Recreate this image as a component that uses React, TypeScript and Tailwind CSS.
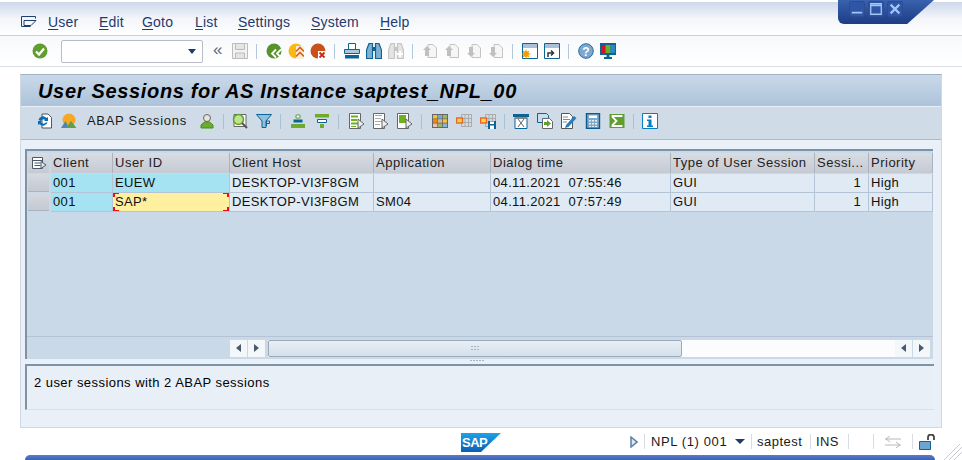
import React from 'react';

const font = "font-['Liberation_Sans',sans-serif]";

type IconProps = { children: React.ReactNode };
const Svg = ({ children }: IconProps) => (
  <svg width="16" height="16" viewBox="0 0 16 16" fill="none">{children}</svg>
);

// separators of the system toolbar
const Sep = () => <div className="w-px h-[15px] ml-[8px] mr-[9px] bg-[#b4c8dc] shrink-0" />;
// separators of the application toolbar
const AppSep = ({ extra = 0 }: { extra?: number }) => (
  <div className="w-px h-[15px] mx-[4px] bg-[#a9bfd4] shrink-0" style={{ marginRight: 4 + extra }} />
);

const Slot = ({ w, children }: { w: number; children: React.ReactNode }) => (
  <div className="flex items-center justify-center shrink-0" style={{ width: w }}>{children}</div>
);

const Check = () => (
  <Svg>
    <circle cx="8" cy="8" r="7.5" fill="#5f9e2f" />
    <path d="M4 8.500l3 3 5-6" stroke="#fff" strokeWidth="2.200" />
  </Svg>
);
const Save = () => (
  <Svg>
    <path d="M.5 .5h15v15H.5z" stroke="#bcbcbc" fill="#f2f2f2" />
    <path d="M3.500 .5h9v6h-9zM3.500 10h9v5.500h-9z" stroke="#bcbcbc" fill="#e4e4e4" />
  </Svg>
);
const Back = () => (
  <Svg>
    <circle cx="8" cy="8" r="7.5" fill="#57932a" />
    <path d="M10 6.500l-4 4 4 4M15 6.500l-4 4 4 4" stroke="#fff" strokeWidth="1.800" />
  </Svg>
);
const Exit = () => (
  <Svg>
    <circle cx="8" cy="8" r="7.5" fill="#fdb913" />
    <path d="M8 3h8v13H8z" fill="#fdf0d8" />
    <path d="M8 8.500l4-4 4 4M8 13.500l4-4 4 4" stroke="#d8641c" strokeWidth="1.700" />
  </Svg>
);
const Cancel = () => (
  <Svg>
    <circle cx="8" cy="8" r="7.5" fill="#c8511b" />
    <rect x="8" y="8" width="8" height="8" fill="#fff" />
    <path d="M9.500 9.500l5 5M14.500 9.500l-5 5" stroke="#c8281b" strokeWidth="1.800" />
  </Svg>
);
const Printer = () => (
  <Svg>
    <path d="M4.500 .5h7v6h-7z" stroke="#0a6496" fill="#fff" />
    <path d="M.5 6.500h15v4H.5z" fill="#a9c7dd" stroke="#0a6496" />
    <path d="M1 12h14v3.500H1z" fill="#0a6496" />
  </Svg>
);
const Binoculars = ({ grey }: { grey?: boolean }) => {
  const c = grey ? '#c4c4c4' : '#0a6496';
  const f = grey ? '#e4e4e4' : '#7fb0d2';
  return (
    <Svg>
      <path d="M3 .5h3.500v15h-6V7zM13 .5H9.500v15h6V7z" stroke={c} strokeWidth="1.200" fill={f} />
      <path d="M6.500 4h3v4h-3z" fill={c} />
      {grey && <path d="M9 11h6M12 8v6" stroke="#fff" strokeWidth="2" />}
    </Svg>
  );
};
const PageArrow = ({ up }: { up: boolean }) => (
  <Svg>
    <path d="M6 1.500h5l3.500 3.500v9.500H6z" stroke="#c4c4c4" fill="#f6f6f6" />
    <path d={up ? 'M5 3l4 4H7v6H3V7H1z' : 'M5 14l4-4H7V4H3v6H1z'} fill="#c0c0c0" />
  </Svg>
);
const NewWindow = ({ kind }: { kind: 'new' | 'link' }) => (
  <Svg>
    <path d="M.5 .5h15v15H.5z" stroke="#0a6496" fill="#fff" />
    <path d="M1 1h14v4H1z" fill="#a9c0d8" />
    {kind === 'new' ? (
      <>
        <circle cx="4" cy="11" r="3" fill="#f59c00" />
        <path d="M4 6.500v9M-.5 11h9M1 8l6 6M7 8l-6 6" stroke="#f59c00" />
      </>
    ) : (
      <path d="M4 14v-4h5M7 7.500L9.500 10 7 12.500" stroke="#333" strokeWidth="1.500" />
    )}
  </Svg>
);
const Help = () => (
  <svg width="16" height="16" viewBox="0 0 16 16">
    <circle cx="8" cy="8" r="7.300" fill="#7ba9cf" stroke="#2a6a9c" />
    <text x="8" y="12.500" textAnchor="middle" fontSize="12" fontWeight="700" fill="#fff" fontFamily="Liberation Sans">?</text>
  </svg>
);
const Monitor = () => (
  <Svg>
    <path d="M0 0h16v12H0z" fill="#0a6496" />
    <path d="M1 2h4.500v8H1z" fill="#d2122e" />
    <path d="M5.500 2h5v8h-5z" fill="#6fae1e" />
    <path d="M10.500 2H15v8h-4.500z" fill="#2b8ac6" />
    <path d="M6.500 12h3v2h-3zM4 14h8v2H4z" fill="#0a6496" />
  </Svg>
);
const Refresh = () => (
  <Svg>
    <path d="M5 1h6l3.500 3.500V15H5z" fill="#fff" stroke="#555" />
    <path d="M1.500 7a4.500 4.500 0 0 1 8-2l1.500-1v4H7l1-1a2.500 2.500 0 0 0-4 1zM10.500 9a4.500 4.500 0 0 1-8 2L1 12V8h4l-1 1a2.500 2.500 0 0 0 4 1z" fill="#0a6cb4" />
  </Svg>
);
const Mountain = () => (
  <Svg>
    <circle cx="8" cy="7" r="6.500" fill="#f7a823" />
    <path d="M0 15l4.500-7L8 15z" fill="#4b87b4" />
    <path d="M5 15l5-7 5.500 7z" fill="#5f9e4b" />
  </Svg>
);
const Person = () => (
  <Svg>
    <circle cx="8" cy="5" r="3.500" fill="#e9e4d6" stroke="#666" />
    <path d="M2 15v-3l3.500-3h5L14 12v3z" fill="#6eaa2e" stroke="#4b8a1e" />
  </Svg>
);
const Search = () => (
  <Svg>
    <path d="M2 1.500h12v12H2z" fill="#fff" stroke="#666" />
    <circle cx="6.500" cy="6.500" r="5" fill="#bfe28a" stroke="#5f9e2f" strokeWidth="1.500" />
    <path d="M10 10l5 5" stroke="#555" strokeWidth="2" />
  </Svg>
);
const Filter = () => (
  <Svg>
    <path d="M.5 1.500h15L10 8v6.500H6V8z" fill="#8fc0e0" stroke="#0a6496" />
    <path d="M10.500 8v5M10.500 8h3v2.500h-3" stroke="#0a6496" />
  </Svg>
);
const SortA = () => (
  <Svg>
    <path d="M6 2h4v3H6z" stroke="#5f9e2f" fill="#fff" />
    <path d="M3.500 6.500h9v3h-9z" fill="#0a6496" />
    <path d="M1 11h14v4H1z" fill="#6eaa2e" />
  </Svg>
);
const SortB = () => (
  <Svg>
    <path d="M1 1h14v3.500H1z" fill="#6eaa2e" />
    <path d="M3.500 6.500h9v3h-9z" stroke="#0a6496" fill="#fff" />
    <path d="M6 11h4v4H6z" fill="#6eaa2e" />
  </Svg>
);
const Doc = ({ v }: { v: 0 | 1 | 2 }) => (
  <Svg>
    <path d="M.5 .5h11v15H.5z" fill="#fff" stroke="#666" />
    {v === 0 && <path d="M2 2.500h7v2H2zM2 6h6v2H2zM2 9.500h7v2H2zM2 13h5v1H2z" fill="#6eb01e" />}
    {v === 1 && <path d="M2 2.500h7M2 5.500h6M2 8.500h7M2 11.500h5" stroke="#aaa" />}
    {v === 2 && <path d="M2 2h7v8H2z" fill="#6eb01e" />}
    <path d="M9 6l6 5-6 4z" fill="#eee" stroke="#666" />
  </Svg>
);
const Colors = () => (
  <Svg>
    <path d="M0 1h16v14H0z" fill="#666" />
    <path d="M1 2h4.200v3.500H1z" fill="#fdc02f" />
    <path d="M5.800 2h4.200v3.500H5.800z" fill="#7ba9cf" />
    <path d="M10.800 2H15v3.500h-4.200z" fill="#94bb62" />
    <path d="M1 6.200h4.200v3.500H1z" fill="#f08c00" />
    <path d="M5.800 6.200h4.200v3.500H5.800z" fill="#d8b4a0" />
    <path d="M10.800 6.200H15v3.500h-4.200z" fill="#fdc02f" />
    <path d="M1 10.500h4.200V14H1z" fill="#eebbbb" />
    <path d="M5.800 10.500h4.200V14H5.800z" fill="#94bb62" />
    <path d="M10.800 10.500H15V14h-4.200z" fill="#8ab4d8" />
  </Svg>
);
const Grid = ({ save }: { save?: boolean }) => (
  <Svg>
    <path d="M5.500 1.500h10v12h-10zM5.500 5.500h10M5.500 9.500h10M9 1.500v12M12.500 1.500v12" stroke="#aaa" />
    <rect x=".5" y="5" width="6" height="5" fill="#fdd835" stroke="#e8642c" strokeWidth="1.400" />
    {save && <path d="M8 8h8v8H8z" fill="#0a6496" />}
    {save && <path d="M10 8.500h4v2.500h-4zM10 12.500h4V16h-4z" fill="#fff" />}
  </Svg>
);
const Layout1 = () => (
  <Svg>
    <path d="M2 4.500h12v11H2z" stroke="#0a6496" fill="#fff" />
    <path d="M0 1h16v3H0z" fill="#0a6496" />
    <path d="M2 4h12v2H2z" fill="#888" />
    <path d="M5 6l6 8M11 6l-6 8" stroke="#666" />
  </Svg>
);
const Layout2 = () => (
  <Svg>
    <path d="M.5 .5h9l2 2v7h-11z" fill="#c7def0" stroke="#0a6496" />
    <path d="M5.500 5.500h7l3 3v7h-10z" fill="#fff" stroke="#666" />
    <path d="M7 9h3V7l4 3.500L10 14v-2H7z" fill="#5f9e2f" />
  </Svg>
);
const Pencil = () => (
  <Svg>
    <path d="M.5 .5h8l3 3v12H.5z" fill="#fff" stroke="#555" />
    <path d="M2 4h5M2 6.500h7M2 9h4" stroke="#888" />
    <path d="M4 15l1-3 8-9 2.500 2-8 9z" fill="#2b7cb8" />
  </Svg>
);
const Calculator = () => (
  <Svg>
    <path d="M1.500 .5h13v15h-13z" fill="#7fa9c9" stroke="#0a5a8c" strokeWidth="1.400" />
    <path d="M4 2.500h8v2.500H4z" fill="#fff" />
    <path d="M4 7h2v1.500H4zM7 7h2v1.500H7zM10 7h2v1.500h-2zM4 10h2v1.500H4zM7 10h2v1.500H7zM10 10h2v1.500h-2zM4 13h2v1H4zM7 13h2v1H7zM10 13h2v1h-2z" fill="#e6eef5" />
  </Svg>
);
const Sigma = () => (
  <Svg>
    <path d="M.5 1h15v14H.5z" fill="#5f9e2f" />
    <path d="M12.500 4V3h-9v1l4 4-4 4v1h9v-1" stroke="#fff" strokeWidth="1.800" fill="none" />
  </Svg>
);
const Info = () => (
  <svg width="16" height="16" viewBox="0 0 16 16">
    <path d="M.5 .5h15v15H.5z" fill="#fff" stroke="#0a7cc0" />
    <path d="M6.500 2.500h3v2.500h-3zM5 6.500h4.500v6H11V14H5v-1.500h1.500V8H5z" fill="#0a7cc0" />
  </svg>
);
const ColumnSelect = () => (
  <Svg>
    <path d="M1.500 2.500h10v11h-10z" stroke="#4a5a6a" fill="#fff" />
    <path d="M1.500 5.500h10M3.500 8h6M3.500 10.500h6" stroke="#4a5a6a" />
    <path d="M10 6.500l5 3.500-5 3.500z" fill="#dfe6ee" stroke="#4a5a6a" />
  </Svg>
);

const menu = [
  { label: 'User', w: 'w-[30px]' },
  { label: 'Edit', w: 'w-[22px]' },
  { label: 'Goto', w: 'w-[32px]' },
  { label: 'List', w: 'w-[22px]' },
  { label: 'Settings', w: 'w-[52px]' },
  { label: 'System', w: 'w-[48px]' },
  { label: 'Help', w: 'w-[30px]' },
];

const columns = [
  { label: 'Client', w: 'w-[62px]' },
  { label: 'User ID', w: 'w-[117px]' },
  { label: 'Client Host', w: 'w-[144px]' },
  { label: 'Application', w: 'w-[117px]' },
  { label: 'Dialog time', w: 'w-[180px]' },
  { label: 'Type of User Session', w: 'w-[144px]' },
  { label: 'Sessi...', w: 'w-[54px]' },
  { label: 'Priority', w: 'w-[64px]' },
];

const rows = [
  ['001', 'EUEW', 'DESKTOP-VI3F8GM', '', '04.11.2021  07:55:46', 'GUI', '1', 'High'],
  ['001', 'SAP*', 'DESKTOP-VI3F8GM', 'SM04', '04.11.2021  07:57:49', 'GUI', '1', 'High'],
];

const Corner = ({ className }: { className: string }) => (
  <span className={`absolute w-[6px] h-[4px] border-[#e8101c] ${className}`} />
);

const Row = ({ cells, selected }: { cells: string[]; selected: boolean }) => (
  <div className="flex h-[19px]">
    <div className="w-[21px] mr-[2px] h-[18px] bg-gradient-to-b from-[#d5d9e0] to-[#c4c9d2] border-b border-[#aab4c0] shrink-0" />
    {cells.map((text, i) => {
      const isKey = i < 2;
      const isSel = selected && i === 1;
      return (
        <div
          key={i}
          className={`${columns[i].w} shrink-0 h-[19px] border-r border-b border-[#b4c4d4] px-[2px] text-[13px] leading-[18px] whitespace-pre text-[#111] tracking-[0.35px] relative ${
            isSel ? 'bg-[#fff0a0]' : isKey ? 'bg-[#a6e3f2]' : 'bg-[#dfeaf4]'
          } ${i === 6 ? 'text-right pr-[7px]' : ''}`}
        >
          {text}
          {isSel && (
            <>
              <Corner className="left-0 top-0 border-l-2 border-t" />
              <Corner className="right-0 top-0 border-r-2 border-t" />
              <Corner className="left-0 bottom-0 border-l-2 border-b" />
              <Corner className="right-0 bottom-0 border-r-2 border-b" />
            </>
          )}
        </div>
      );
    })}
  </div>
);

const ScrollBtn = ({ dir }: { dir: 'l' | 'r' }) => (
  <div className="w-[17px] h-[17px] bg-[#f4f7fa] flex items-center justify-center shrink-0">
    <div
      className={`w-0 h-0 border-y-[4px] border-y-transparent ${
        dir === 'l' ? 'border-r-[5px] border-r-[#4a5a6a]' : 'border-l-[5px] border-l-[#4a5a6a]'
      }`}
    />
  </div>
);

const Dots = () => (
  <div className="grid grid-cols-3 gap-x-px gap-y-[2px]">
    {[0, 1, 2, 3, 4, 5].map((d) => <span key={d} className="w-[2px] h-[1px] bg-[#a8b4c0]" />)}
  </div>
);

const StatusDivider = () => <div className="w-px h-[15px] bg-[#d8dde4] shrink-0" />;

export default function App() {
  return (
    <div className={`${font} w-[962px] h-[460px] bg-white relative overflow-hidden flex flex-col`}>
      {/* menu */}
      <div className="h-[36px] shrink-0 bg-gradient-to-b from-[#cdd8ea] via-[#f3f5fa] to-white border-t-2 border-t-white border-b border-[#c8d0dc] flex items-center pt-[7px] pl-[21px]">
        <svg width="16" height="14" viewBox="0 0 16 14" className="mr-[11px]">
          <path d="M.5 1.500h14v2M.5 1.500v10h9M3 5.500h12l-5 5H3z" stroke="#1f3f6e" fill="none" />
        </svg>
        <div className="flex gap-[21px] text-[14px] text-[#1f3a6e] tracking-[0.2px]">
          {menu.map((m) => (
            <span key={m.label} className={`${m.w} whitespace-nowrap`}>
              <span className="underline underline-offset-2">{m.label[0]}</span>{m.label.slice(1)}
            </span>
          ))}
        </div>
      </div>

      {/* system toolbar */}
      <div className="h-[31px] shrink-0 bg-gradient-to-b from-[#f7f9fc] to-white border-b border-[#d8dde6] flex items-center pl-[32px]">
        <Slot w={16}><Check /></Slot>
        <div className="ml-[13px] w-[142px] h-[23px] bg-white border border-[#b8bcc4] rounded-[2px] flex items-center justify-end pr-[6px]">
          <div className="w-0 h-0 border-x-[4px] border-x-transparent border-t-[5px] border-t-[#1f3a6e]" />
        </div>
        <span className="ml-[10px] w-[14px] text-[17px] leading-none text-[#666] -mt-[3px]">«</span>
        <div className="ml-[5px]"><Slot w={16}><Save /></Slot></div>
        <Sep />
        <div className="flex gap-[6px]"><Back /><Exit /><Cancel /></div>
        <Sep />
        <div className="flex gap-[6px]"><Printer /><Binoculars /><Binoculars grey /></div>
        <Sep />
        <div className="flex gap-[6px]"><PageArrow up /><PageArrow up /><PageArrow up={false} /><PageArrow up={false} /></div>
        <Sep />
        <div className="flex gap-[6px]"><NewWindow kind="new" /><NewWindow kind="link" /></div>
        <Sep />
        <div className="flex gap-[6px]"><Help /><Monitor /></div>
      </div>

      {/* main panel */}
      <div className="mt-[7px] ml-[20px] w-[922px] h-[354px] shrink-0 bg-[#eaf0f7] border border-[#cfd8e4] border-t-[#9fb2c8] flex flex-col">
        <div className="h-[31px] shrink-0 bg-gradient-to-b from-[#c9d9e9] to-[#adc3da] flex items-center pl-[17px] text-[20px] font-bold italic text-black tracking-[0.67px]">
          User Sessions for AS Instance saptest_NPL_00
        </div>
        <div className="h-[34px] shrink-0 bg-[#cfdce8] border-t border-[#e8eff6] border-b border-b-[#a8bacb] flex items-center pl-[12px] pb-[4px]">
          <Slot w={24}><Refresh /></Slot>
          <Slot w={24}><Mountain /></Slot>
          <span className="ml-[6px] w-[108px] text-[13px] text-[#1a1a1a] tracking-[0.7px] whitespace-nowrap">ABAP Sessions</span>
          <Slot w={24}><Person /></Slot>
          <AppSep />
          <Slot w={24}><Search /></Slot>
          <Slot w={24}><Filter /></Slot>
          <AppSep extra={1} />
          <Slot w={24}><SortA /></Slot>
          <Slot w={24}><SortB /></Slot>
          <AppSep extra={2} />
          <Slot w={24}><Doc v={0} /></Slot>
          <Slot w={24}><Doc v={1} /></Slot>
          <Slot w={24}><Doc v={2} /></Slot>
          <AppSep extra={2} />
          <Slot w={24}><Colors /></Slot>
          <Slot w={24}><Grid /></Slot>
          <Slot w={24}><Grid save /></Slot>
          <AppSep />
          <Slot w={24}><Layout1 /></Slot>
          <Slot w={24}><Layout2 /></Slot>
          <Slot w={24}><Pencil /></Slot>
          <Slot w={24}><Calculator /></Slot>
          <Slot w={24}><Sigma /></Slot>
          <AppSep />
          <Slot w={24}><Info /></Slot>
        </div>

        {/* table */}
        <div className="mt-[9px] ml-[4px] w-[908px] h-[210px] shrink-0 bg-[#c9d9e8] border-t-2 border-l-2 border-[#7f93a6] pl-[1px] pt-[2px] flex flex-col">
          <div className="flex h-[21px] shrink-0">
            <div className="w-[21px] mr-[2px] h-[20px] bg-gradient-to-b from-[#d8dce3] to-[#c5cad3] flex items-center justify-center shrink-0">
              <ColumnSelect />
            </div>
            {columns.map((c) => (
              <div
                key={c.label}
                className={`${c.w} shrink-0 h-[20px] bg-gradient-to-b from-[#d8dce3] to-[#c5cad3] border-r border-[#aab4c0] px-[2px] text-[13px] leading-[20px] text-[#222] tracking-[0.5px] whitespace-nowrap overflow-hidden`}
              >
                {c.label}
              </div>
            ))}
          </div>
          {rows.map((r, i) => <Row key={i} cells={r} selected={i === 1} />)}
          <div className="flex-1" />
          <div className="h-[23px] shrink-0 -ml-[1px] border-t border-[#b4c4d6] flex items-center pl-[203px]">
            <ScrollBtn dir="l" />
            <div className="ml-[1px]"><ScrollBtn dir="r" /></div>
            <div className="ml-[3px] w-[627px] h-[17px] flex bg-white">
              <div className="w-[414px] h-[17px] bg-gradient-to-b from-[#e8eff5] to-[#d4e0ea] border border-[#9aaab8] rounded-[2px] flex items-center justify-center shrink-0">
                <Dots />
              </div>
              <div className="flex-1 bg-[#fbfcfd]" />
            </div>
            <ScrollBtn dir="l" />
            <div className="ml-[1px]"><ScrollBtn dir="r" /></div>
          </div>
        </div>

        {/* splitter */}
        <div className="h-[5px] shrink-0 flex justify-center items-start">
          <div className="flex gap-px ml-[-8px] mt-[1px]">
            {[0, 1, 2, 3, 4].map((d) => <span key={d} className="w-[2px] h-px bg-[#a8b4c0]" />)}
          </div>
        </div>

        {/* messages */}
        <div className="ml-[4px] w-[909px] h-[46px] shrink-0 bg-[#e8eff7] border-t-2 border-l-2 border-[#7f93a6] border-b border-r-0 border-b-[#d8e0ea] pl-[7px] pt-[7px] text-[13px] text-black tracking-[0.45px]">
          2 user sessions with 2 ABAP sessions
        </div>
      </div>

      {/* status bar */}
      <div className="h-[27px] shrink-0 flex items-center pl-[461px] relative">
        <svg width="40" height="19" viewBox="0 0 40 19" className="shrink-0 mt-[2px]">
          <defs>
            <linearGradient id="sapblue" x1="0" y1="0" x2="0" y2="1">
              <stop offset="0" stopColor="#1fa2e8" />
              <stop offset="1" stopColor="#0a5fb4" />
            </linearGradient>
          </defs>
          <path d="M0 0h40L20 19H0z" fill="url(#sapblue)" />
          <text x="1" y="14" fontSize="13" fontWeight="700" fill="#fff" fontFamily="Liberation Sans" letterSpacing="-0.5">SAP</text>
        </svg>
        <svg width="8" height="12" viewBox="0 0 8 12" className="ml-[129px] shrink-0">
          <path d="M1 1l6 5-6 5z" fill="#dfe8f2" stroke="#5a80a8" strokeWidth="1.500" />
        </svg>
        <div className="ml-[6px]"><StatusDivider /></div>
        <span className="ml-[6px] w-[78px] text-[13px] text-[#1a1a1a] tracking-[0.6px] whitespace-pre">NPL (1) 001</span>
        <div className="ml-[6px] w-0 h-0 border-x-[5px] border-x-transparent border-t-[5px] border-t-[#1f3a6e]" />
        <div className="ml-[6px]"><StatusDivider /></div>
        <span className="ml-[5px] w-[47px] text-[13px] text-[#1a1a1a] tracking-[0.5px]">saptest</span>
        <div className="ml-[6px]"><StatusDivider /></div>
        <span className="ml-[5px] w-[26px] text-[13px] text-[#1a1a1a] tracking-[0.4px]">INS</span>
        <div className="ml-[6px]"><StatusDivider /></div>
        <div className="ml-[24px]"><StatusDivider /></div>
        <svg width="16" height="12" viewBox="0 0 16 12" className="ml-[11px] shrink-0">
          <path d="M0 3h16M5 0L1 3l4 3M0 9h16M11 6l4 3-4 3" stroke="#b4b8be" fill="none" />
        </svg>
        <div className="ml-[11px]"><StatusDivider /></div>
        <svg width="17" height="16" viewBox="0 0 17 16" className="ml-[6px] shrink-0">
          <path d="M9 6V3.500a3 3 0 0 1 6 0V6" stroke="#444" strokeWidth="1.800" fill="none" />
          <path d="M.5 7.500h11v8H.5z" fill="#6ea5d0" stroke="#0a6496" />
        </svg>
      </div>
      <div className="ml-[25px] w-[910px] h-[5px] shrink-0 rounded-t-[12px] bg-gradient-to-b from-[#5a7cc8] to-[#3a62b4]" />

      {/* window buttons */}
      <div className="absolute top-0 right-[28px] w-[96px] h-[24px] bg-gradient-to-b from-[#3a62ae] to-[#1d3c86] rounded-bl-[6px] flex items-start pl-[11px] pt-[1px] gap-[3px] [clip-path:polygon(0_0,100%_0,72%_100%,0_100%)]">
        {[
          <path key="a" d="M2 12h12" stroke="#a4c4f8" strokeWidth="2" />,
          <path key="b" d="M2 2h12v12H2zM2 4h12" stroke="#a4c4f8" strokeWidth="1.500" fill="none" />,
          <path key="c" d="M3 3l10 10M13 3L3 13" stroke="#a4c4f8" strokeWidth="2.500" />,
        ].map((p, i) => (
          <div key={i} className="w-[16px] h-[16px] rounded-[2px] border border-[#2c4c94] bg-[#2f56a4]">
            <svg width="14" height="14" viewBox="0 0 16 16">{p}</svg>
          </div>
        ))}
      </div>
      {/* resize grip */}
      <svg width="18" height="16" viewBox="0 0 18 16" className="absolute right-0 bottom-0">
        <path d="M0 16L16 0M5 16L18 3M10 16L18 8" stroke="#c8ccd2" />
      </svg>
    </div>
  );
}
